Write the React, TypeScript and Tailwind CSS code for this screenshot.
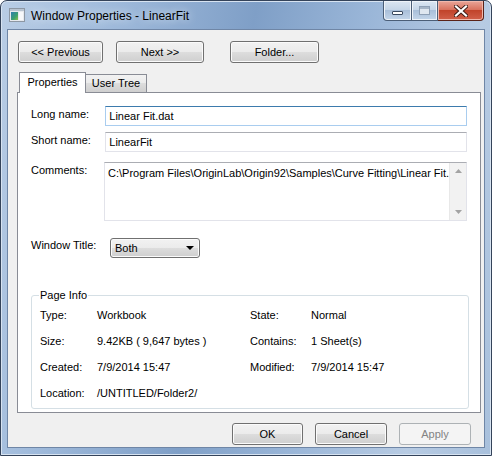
import type { ReactNode } from 'react';

const btn =
  'h-[22px] rounded-[3px] border border-[#707070] bg-[linear-gradient(#f2f2f2_0%,#ebebeb_50%,#dddddd_50%,#cfcfcf_100%)] shadow-[inset_0_0_0_1px_#fbfbfb] text-[11px] text-black flex items-center justify-center';

function Button({ children, className = '' }: { children: ReactNode; className?: string }) {
  return <div className={`${btn} ${className}`}>{children}</div>;
}

function WinIcon() {
  return (
    <svg width="16" height="14" viewBox="0 0 16 14">
      <rect x="0.5" y="0.5" width="15" height="13" fill="#e6e9ee" stroke="#8d97a3" />
      <rect x="1" y="1" width="14" height="2" fill="#b9c4d1" />
      <defs>
        <linearGradient id="g1" x1="0" y1="0" x2="1" y2="1">
          <stop offset="0" stopColor="#2e7db1" />
          <stop offset="0.6" stopColor="#3aa070" />
          <stop offset="1" stopColor="#8cc04a" />
        </linearGradient>
      </defs>
      <rect x="2" y="4" width="7" height="8" fill="url(#g1)" />
      <rect x="10" y="4" width="4" height="8" fill="#f7f8fa" />
    </svg>
  );
}

function Caption() {
  return (
    <div className="flex h-[20px] items-stretch">
      <div className="flex w-[29px] items-center justify-center rounded-bl-[4px] border border-t-0 border-[#4b5e77] bg-[linear-gradient(#dbe6f2_0%,#c6d6e8_45%,#a9bfd9_50%,#c4d6ea_100%)] shadow-[inset_0_0_0_1px_#eef3f9]">
        <div className="mt-[4px] h-[4px] w-[11px] rounded-[1px] border border-[#3a4a60] bg-white" />
      </div>
      <div className="flex w-[26px] items-center justify-center border-y border-r border-t-0 border-[#4b5e77] bg-[linear-gradient(#dbe6f2_0%,#c6d6e8_45%,#a9bfd9_50%,#c4d6ea_100%)] shadow-[inset_0_0_0_1px_#eef3f9]">
        <div className="h-[9px] w-[11px] border border-[#8ea0b6] bg-[#dfe7f0] shadow-[inset_0_2px_0_#a6b5c7]" />
      </div>
      <div className="flex w-[46px] items-center justify-center rounded-br-[4px] border border-l-0 border-t-0 border-[#5a2218] bg-[linear-gradient(#e9a699_0%,#d9735f_45%,#c1442b_50%,#d1604a_100%)] shadow-[inset_0_0_0_1px_#f0b8ac]">
        <svg width="14" height="12" viewBox="0 0 14 12">
          <path d="M2 1.5 L12 10.5 M12 1.5 L2 10.5" stroke="#3a1a14" strokeWidth="4" strokeLinecap="square" />
          <path d="M2 1.5 L12 10.5 M12 1.5 L2 10.5" stroke="#ffffff" strokeWidth="2.2" strokeLinecap="square" />
        </svg>
      </div>
    </div>
  );
}

function Field({ value, focused }: { value: string; focused?: boolean }) {
  return (
    <div
      className={`flex h-[20px] items-center border px-[3px] text-[11px] text-black bg-white ${
        focused
          ? 'border-[#a9cdef] border-t-[#3d7bad]'
          : 'border-[#e2e3ea] border-t-[#abadb3]'
      }`}
    >
      {value}
    </div>
  );
}

function Arrow({ up }: { up?: boolean }) {
  return (
    <svg width="7" height="4" viewBox="0 0 7 4">
      <path d={up ? 'M0 4 L3.5 0 L7 4 Z' : 'M0 0 L3.5 4 L7 0 Z'} fill="#a3a3a3" />
    </svg>
  );
}

function InfoRow({ a, b, c, d }: { a: string; b: string; c?: string; d?: string }) {
  return (
    <div className="grid h-[26px] grid-cols-[57px_153px_61px_1fr] items-center">
      <span>{a}</span>
      <span>{b}</span>
      <span>{c}</span>
      <span>{d}</span>
    </div>
  );
}

export default function App() {
  return (
    <div className="h-[456px] w-[492px] overflow-hidden bg-white font-['Liberation_Sans',Arial,sans-serif]">
      <div className="flex h-[456px] w-[492px] flex-col rounded-t-[7px] border border-[#34435a] bg-[linear-gradient(100deg,#b9cde5_0%,#9fbadb_20%,#7f9fc7_45%,#9ab6d8_65%,#b7cbe3_85%,#a8c0dc_100%)] shadow-[inset_0_0_0_1px_#d7e3f1]">
        <div className="flex h-[28px] items-start">
          <div className="ml-[8px] mt-[7px]">
            <WinIcon />
          </div>
          <div className="ml-[6px] mt-[6px] text-[12px] text-black [text-shadow:0_0_8px_#e8f0fa]">
            Window Properties - LinearFit
          </div>
          <div className="ml-auto mr-[7px]">
            <Caption />
          </div>
        </div>
        <div className="mx-[6px] mb-[7px] flex flex-1 flex-col border border-[#6f86a6] bg-[#f0f0f0] text-[11px] text-black">
          <div className="ml-[10px] mt-[11px] flex h-[22px]">
            <Button className="w-[85px]">&lt;&lt; Previous</Button>
            <Button className="ml-[13px] w-[88px]">Next &gt;&gt;</Button>
            <Button className="ml-[26px] w-[89px]">Folder...</Button>
          </div>
          <div className="ml-[11px] mt-[9px] flex h-[20px] items-end">
            <div className="relative z-10 -mb-px flex h-[21px] w-[67px] items-center justify-center border border-b-0 border-[#898c95] bg-white pb-[1px]">
              Properties
            </div>
            <div className="flex h-[18px] w-[61px] items-center justify-center border border-b-0 border-l-0 border-[#898c95] bg-[linear-gradient(#f2f2f2_0%,#ebebeb_50%,#dddddd_50%,#cfcfcf_100%)]">
              User Tree
            </div>
          </div>
          <div className="ml-[9px] flex h-[321px] w-[464px] flex-col border border-[#898c95] bg-white px-[13px] pt-[13px]">
            <div className="flex items-start">
              <div className="w-[75px]">Long name:</div>
              <div className="w-[365px]">
                <Field value="Linear Fit.dat" focused />
              </div>
            </div>
            <div className="mt-[6px] flex items-start">
              <div className="w-[75px]">Short name:</div>
              <div className="w-[365px]">
                <Field value="LinearFit" />
              </div>
            </div>
            <div className="mt-[10px] flex items-start">
              <div className="w-[75px]">Comments:</div>
              <div className="flex h-[59px] w-[363px] border border-[#e2e3ea] border-t-[#abadb3] bg-white">
                <div className="flex-1 overflow-hidden whitespace-nowrap px-[3px] pt-[2px]">
                  C:\Program Files\OriginLab\Origin92\Samples\Curve Fitting\Linear Fit.dat
                </div>
                <div className="flex w-[17px] flex-col items-center justify-between border-l border-[#e8e8e8] bg-[#f2f2f2] py-[6px]">
                  <Arrow up />
                  <Arrow />
                </div>
              </div>
            </div>
            <div className="mt-[16px] flex items-center">
              <div className="w-[79px] pb-[5px]">Window Title:</div>
              <div className="flex h-[20px] w-[90px] items-center rounded-[3px] border border-[#707070] bg-[linear-gradient(#f2f2f2_0%,#ebebeb_50%,#dddddd_50%,#cfcfcf_100%)] pl-[4px] pr-[5px] shadow-[inset_0_0_0_1px_#fbfbfb]">
                <span>Both</span>
                <svg className="ml-auto" width="8" height="4" viewBox="0 0 8 4">
                  <path d="M0 0 L8 0 L4 4 Z" fill="#000" />
                </svg>
              </div>
            </div>
            <fieldset className="mt-[30px] w-[438px] rounded-[3px] border border-[#d5dfe5] pb-[1px] pl-[8px]">
              <legend className="ml-[-1px] px-[1px] leading-[13px]">Page Info</legend>
              <div className="mt-[1px]">
                <InfoRow a="Type:" b="Workbook" c="State:" d="Normal" />
                <InfoRow a="Size:" b="9.42KB ( 9,647 bytes )" c="Contains:" d="1 Sheet(s)" />
                <InfoRow a="Created:" b="7/9/2014 15:47" c="Modified:" d="7/9/2014 15:47" />
                <InfoRow a="Location:" b="/UNTITLED/Folder2/" />
              </div>
            </fieldset>
          </div>
          <div className="mr-[13px] mt-[10px] flex justify-end gap-[12px]">
            <Button className="w-[71px] border-[#3c7fb1] bg-[linear-gradient(#eaf6fd_0%,#d9f0fc_50%,#bee6fd_50%,#a7d9f5_100%)] shadow-[inset_0_0_0_1px_#cfeefd,0_0_2px_#8fcaf0]">
              OK
            </Button>
            <Button className="w-[72px]">Cancel</Button>
            <div className="flex h-[22px] w-[72px] items-center justify-center rounded-[3px] border border-[#adb2b5] bg-[#f4f4f4] text-[#838383]">
              Apply
            </div>
          </div>
        </div>
      </div>
    </div>
  );
}
